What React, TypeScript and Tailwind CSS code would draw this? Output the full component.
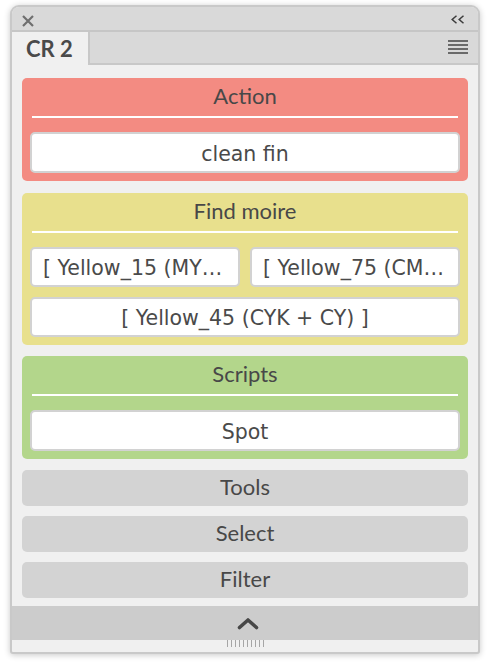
import React from "react";

const titleFont = { fontFamily: "Lato, 'Open Sans', sans-serif" };
const btnFont = { fontFamily: "'DejaVu Sans', Verdana, sans-serif" };

function PanelButton({ label, className = "" }: { label: string; className?: string }) {
  return (
    <button
      className={`block min-w-0 rounded-[5px] border-2 border-[#d2d2d2] bg-white px-[11px] pt-[3px] text-[20.5px] text-[#4a4a4a] ${className}`}
      style={btnFont}
    >
      <span className="block truncate text-center">{label}</span>
    </button>
  );
}

function Section({
  title,
  color,
  className = "",
  children,
}: {
  title: string;
  color: string;
  className?: string;
  children: React.ReactNode;
}) {
  return (
    <div className={`rounded-[5px] px-[8px] pb-[8px] ${color} ${className}`}>
      <div
        className="flex h-[38px] items-center justify-center pb-[3px] text-[22px] text-[#484848]"
        style={titleFont}
      >
        {title}
      </div>
      <div className="mx-[2px] h-[2px] bg-white" />
      <div className="mt-[14px]">{children}</div>
    </div>
  );
}

function GrayRow({ label, className = "" }: { label: string; className?: string }) {
  return (
    <div
      className={`flex h-[36px] items-center justify-center rounded-[5px] bg-[#d3d3d3] pb-[3px] text-[22px] text-[#484848] ${className}`}
      style={titleFont}
    >
      {label}
    </div>
  );
}

export default function App() {
  return (
    <div className="min-h-[668px] bg-white pl-[10px] pt-[5px]">
      <div className="w-[470px] overflow-hidden rounded-t-[9px] rounded-b-[3px] border-2 border-[#c9c9c9] bg-[#f0f0f0] shadow-[0_1px_6px_rgba(0,0,0,0.22)]">
        {/* title bar */}
        <div className="flex h-[25px] items-start justify-between border-b-2 border-[#c6c6c6] bg-[#d9d9d9] pl-[10px] pr-[13px]">
          <svg width="12" height="12" viewBox="0 0 12 12" className="mt-[8px]">
            <path d="M1 1 L11 11 M11 1 L1 11" stroke="#6f6f6f" strokeWidth="2.2" />
          </svg>
          <svg width="14" height="9" viewBox="0 0 14 9" className="mt-[8px]">
            <path d="M5.5 0.8 L1.2 4.5 L5.5 8.2 M12.5 0.8 L8.2 4.5 L12.5 8.2" stroke="#3c3c3c" strokeWidth="1.5" fill="none" />
          </svg>
        </div>

        {/* tab row */}
        <div className="flex h-[33px]">
          <div
            className="flex w-[78px] items-center border-r-2 border-[#c8c8c8] bg-[#f0f0f0] pb-[1px] pl-[14px] text-[22px] font-bold text-[#4a4a4a]"
            style={titleFont}
          >
            CR 2
          </div>
          <div className="flex flex-1 items-start justify-end border-b-2 border-[#c8c8c8] bg-[#d9d9d9] pr-[10px]">
            <svg width="20" height="14" viewBox="0 0 20 14" className="mt-[8px]">
              <path d="M0 1 H20 M0 5 H20 M0 9 H20 M0 13 H20" stroke="#6a6a6a" strokeWidth="2" />
            </svg>
          </div>
        </div>

        {/* content */}
        <div className="px-[10px] pt-[13px]">
          <Section title="Action" color="bg-[#f38b82]">
            <PanelButton label="clean fin" className="h-[41px] w-full" />
          </Section>

          <Section title="Find moire" color="bg-[#e8e08d]" className="mt-[12px]">
            <div className="grid grid-cols-2 gap-[10px]">
              <PanelButton label="[ Yellow_15 (MYK + MY) ]" className="h-[40px]" />
              <PanelButton label="[ Yellow_75 (CMK + CM) ]" className="h-[40px]" />
              <PanelButton label="[ Yellow_45 (CYK + CY) ]" className="col-span-2 h-[40px]" />
            </div>
          </Section>

          <Section title="Scripts" color="bg-[#b3d68b]" className="mt-[11px]">
            <PanelButton label="Spot" className="h-[41px] w-full" />
          </Section>

          <GrayRow label="Tools" className="mt-[11px]" />
          <GrayRow label="Select" className="mt-[10px]" />
          <GrayRow label="Filter" className="mt-[10px]" />
        </div>

        {/* bottom bar */}
        <div className="mt-[8px] flex h-[34px] items-center justify-center bg-[#cccccc]">
          <svg width="22" height="13" viewBox="0 0 22 13" className="ml-[6px]">
            <path d="M2.5 10.5 L11 3 L19.5 10.5" stroke="#474747" strokeWidth="3.6" fill="none" strokeLinecap="round" strokeLinejoin="round" />
          </svg>
        </div>
        <div className="flex h-[12px] justify-center">
          <div className="flex h-[7px] gap-[3px]">
            {Array.from({ length: 10 }).map((_, i) => (
              <div key={i} className="h-full w-[1px] bg-[#a6a6a6]" />
            ))}
          </div>
        </div>
      </div>
    </div>
  );
}
